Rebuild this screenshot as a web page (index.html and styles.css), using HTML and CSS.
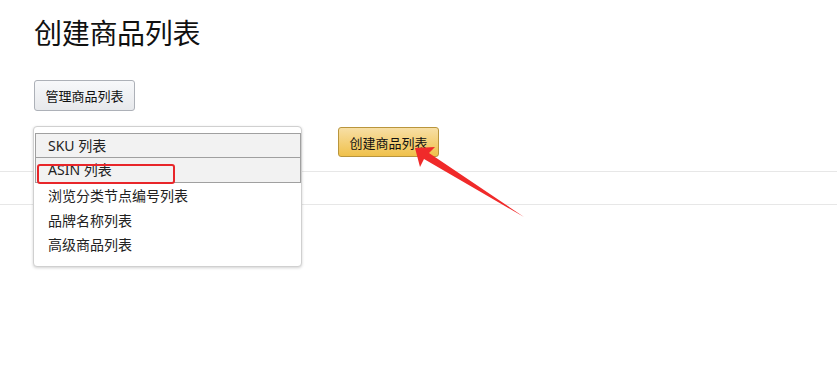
FILE: index.html
```html
<!DOCTYPE html>
<html lang="zh-CN">
<head>
<meta charset="utf-8">
<title>创建商品列表</title>
<link rel="stylesheet" href="styles.css">
</head>
<body>
<div class="page">
  <h1 class="title">创建商品列表</h1>
  <div class="toolbar">
    <button class="btn btn-gray">管理商品列表</button>
  </div>
  <div class="form-row">
    <div class="select-wrap">
      <div class="select-box"></div>
      <ul class="dropdown">
        <li class="opt opt-sel">SKU 列表</li>
        <li class="opt opt-sel opt-hl">ASIN 列表</li>
        <li class="opt">浏览分类节点编号列表</li>
        <li class="opt">品牌名称列表</li>
        <li class="opt">高级商品列表</li>
      </ul>
    </div>
    <button class="btn btn-yellow">创建商品列表</button>
  </div>
</div>
<div class="divider-band"></div>
<svg class="arrow" width="837" height="379" viewBox="0 0 837 379">
  <polygon points="415,148 435,147 429,153 524,217 424,159 420,167" fill="#f02a2a"/>
</svg>
</body>
</html>
```
FILE: styles.css
```css
html, body {
  margin: 0;
  padding: 0;
  background: #fff;
}
body {
  font-family: "Noto Sans", "Noto Sans CJK SC", sans-serif;
  color: #111;
  position: relative;
  width: 837px;
  height: 379px;
  overflow: hidden;
}
.page {
  position: relative;
  z-index: 1;
  padding: 0 0 0 34px;
}
.title {
  margin: 0;
  padding-top: 12px;
  font-family: "Noto Sans CJK SC", sans-serif;
  font-weight: 400;
  font-size: 28px;
  line-height: 40px;
  color: #111;
  letter-spacing: -0.3px;
}
.toolbar {
  margin-top: 28px;
  display: flex;
}
.btn {
  font-family: "Noto Sans CJK SC", sans-serif;
  font-size: 13px;
  color: #111;
  height: 31px;
  padding: 0 8px;
  border-radius: 3px;
  cursor: pointer;
}
.btn-gray {
  width: 101px;
  border: 1px solid #adb1b8;
  background: linear-gradient(#f7f8fa, #e7e9ec);
}
.form-row {
  margin-top: 15px;
  display: flex;
  align-items: flex-start;
}
.select-wrap {
  position: relative;
  width: 269px;
  height: 30px;
  margin-left: -1px;
}
.select-box {
  height: 30px;
}
.dropdown {
  position: absolute;
  left: 0;
  top: 0;
  z-index: 2;
  width: 267px;
  margin: 0;
  padding: 6px 0 9px;
  list-style: none;
  background: #fff;
  border: 1px solid #d0d0d0;
  border-radius: 4px;
  box-shadow: 0 1px 3px rgba(0,0,0,0.18);
}
.opt {
  height: 24.5px;
  line-height: 26px;
  padding-left: 14px;
  font-size: 14px;
  color: #222;
  box-sizing: border-box;
}
.opt-sel {
  margin: 0 0 0 1px;
  padding-left: 12px;
  background: #f2f2f2;
  border: 1px solid #a0a0a0;
  height: 25px;
  line-height: 23px;
}
.opt-sel + .opt-sel {
  border-top: none;
  height: 25px;
  line-height: 24px;
}
.opt-hl {
  position: relative;
}
.opt-hl::after {
  content: "";
  position: absolute;
  left: 1px;
  top: 6px;
  width: 134px;
  height: 16px;
  border: 2px solid #e8262a;
  border-radius: 3px;
}
.btn-yellow {
  margin-left: 36px;
  margin-top: 1px;
  width: 101px;
  height: 30px;
  border: 1px solid #b9953c;
  background: linear-gradient(#f7dfa5, #f0c14b);
}
.divider-band {
  position: absolute;
  left: 0;
  top: 171px;
  width: 837px;
  height: 32px;
  border-top: 1px solid #e7e7e7;
  border-bottom: 1px solid #e7e7e7;
  z-index: 0;
}
.arrow {
  position: absolute;
  left: 0;
  top: 0;
  z-index: 3;
  pointer-events: none;
}
```
